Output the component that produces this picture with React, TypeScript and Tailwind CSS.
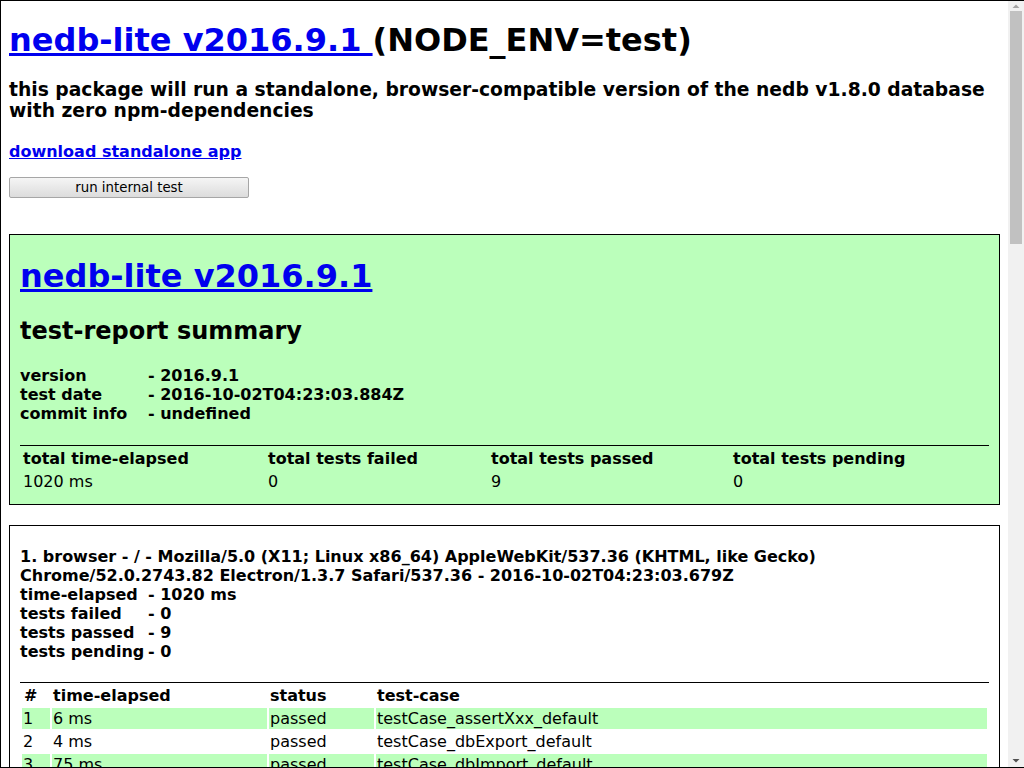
import React from "react";

const tests = [
  ["1", "6 ms", "passed", "testCase_assertXxx_default"],
  ["2", "4 ms", "passed", "testCase_dbExport_default"],
  ["3", "75 ms", "passed", "testCase_dbImport_default"],
  ["4", "12 ms", "passed", "testCase_dbReset_default"],
  ["5", "31 ms", "passed", "testCase_dbTableCreateMany_default"],
  ["6", "8 ms", "passed", "testCase_dbTableDrop_default"],
  ["7", "5 ms", "passed", "testCase_onErrorDefault_default"],
  ["8", "3 ms", "passed", "testCase_testReportCreate_default"],
  ["9", "2 ms", "passed", "testCase_webpage_default"],
];

function ScrollBar() {
  return (
    <div className="w-[16px] shrink-0 bg-[#f1f1f1] flex flex-col items-center">
      <svg width="16" height="10" viewBox="0 0 16 10" className="shrink-0">
        <polygon points="4.5,7 11.5,7 8,3.5" fill="#a3a3a3" />
      </svg>
      <div className="w-[12px] h-[233px] bg-[#c1c1c1] shrink-0" />
      <div className="flex-1" />
      <svg width="16" height="12" viewBox="0 0 16 12" className="shrink-0">
        <polygon points="4.5,4 11.5,4 8,7.5" fill="#505050" />
      </svg>
    </div>
  );
}

export default function App() {
  return (
    <div className="h-[768px] w-[1024px] flex bg-white border-l border-t border-b border-black overflow-hidden">
      <div className="flex-1 min-w-0 overflow-hidden text-black font-['DejaVu_Sans',sans-serif]">
        <div className="px-2 pb-10">
          <h1 className="mt-[21px] text-[32px] leading-[37px] font-bold">
            <a href="#" className="text-[#0000ee] underline">nedb-lite v2016.9.1 </a>
            (NODE_ENV=test)
          </h1>
          <h3 className="mt-[20px] text-[18.72px] leading-[21px] font-bold">
            this package will run a standalone, browser-compatible version of the nedb v1.8.0 database
            with zero npm-dependencies
          </h3>
          <div className="mt-[21px] text-[16px] leading-[19px] font-bold">
            <a href="#" className="text-[#0000ee] underline">download standalone app</a>
          </div>
          <button className="mt-[16px] block w-[240px] h-[21px] border border-[#a6a6a6] rounded-[2px] bg-linear-to-b from-[#f5f5f5] to-[#dcdcdc] text-[13.33px] leading-[18px] text-black">
            run internal test
          </button>

          <div className="mt-[36px] border border-black bg-[#bbffbb] px-[10px] pb-[10px] font-bold">
            <h1 className="pt-[23px] text-[32px] leading-[37px] font-bold">
              <a href="#" className="text-[#0000ee] underline">nedb-lite v2016.9.1</a>
            </h1>
            <h2 className="mt-[22px] text-[24px] leading-[28px] font-bold">test-report summary</h2>
            <div className="mt-[21px] text-[16px] leading-[19px]">
              <div><span className="inline-block w-[128px] whitespace-nowrap">version</span>- 2016.9.1</div>
              <div><span className="inline-block w-[128px] whitespace-nowrap">test date</span>- 2016-10-02T04:23:03.884Z</div>
              <div><span className="inline-block w-[128px] whitespace-nowrap">commit info</span>- undefined</div>
            </div>
            <table className="mt-[22px] w-full table-fixed border-separate border-spacing-[2px] border-t border-black text-[16px] leading-[19px]">
              <colgroup>
                <col className="w-[243px]" />
                <col className="w-[221px]" />
                <col className="w-[240px]" />
                <col className="w-[255px]" />
              </colgroup>
              <thead>
                <tr>
                  <th className="p-[1px] text-left font-bold">total time-elapsed</th>
                  <th className="p-[1px] text-left font-bold">total tests failed</th>
                  <th className="p-[1px] text-left font-bold">total tests passed</th>
                  <th className="p-[1px] text-left font-bold">total tests pending</th>
                </tr>
              </thead>
              <tbody className="font-normal">
                <tr>
                  <td className="p-[1px]">1020 ms</td>
                  <td className="p-[1px]">0</td>
                  <td className="p-[1px]">9</td>
                  <td className="p-[1px]">0</td>
                </tr>
              </tbody>
            </table>
          </div>

          <div className="mt-[20px] border border-black bg-white px-[10px] pb-[10px] font-bold">
            <div className="pt-[21px] text-[16px] leading-[19px]">
              <div>
                1. browser - / - Mozilla/5.0 (X11; Linux x86_64) AppleWebKit/537.36 (KHTML, like Gecko)
                <br />
                Chrome/52.0.2743.82 Electron/1.3.7 Safari/537.36 - 2016-10-02T04:23:03.679Z
              </div>
              <div><span className="inline-block w-[128px] whitespace-nowrap">time-elapsed</span>- 1020 ms</div>
              <div><span className="inline-block w-[128px] whitespace-nowrap">tests failed</span>- 0</div>
              <div><span className="inline-block w-[128px] whitespace-nowrap">tests passed</span>- 9</div>
              <div><span className="inline-block w-[128px] whitespace-nowrap">tests pending</span>- 0</div>
            </div>
            <table className="mt-[21px] w-full table-fixed border-separate border-spacing-[2px] border-t border-black text-[16px] leading-[19px]">
              <colgroup>
                <col className="w-[28px]" />
                <col className="w-[215px]" />
                <col className="w-[105px]" />
                <col className="w-[611px]" />
              </colgroup>
              <thead>
                <tr>
                  <th className="p-[1px] pl-[2px] text-left font-bold">#</th>
                  <th className="p-[1px] text-left font-bold">time-elapsed</th>
                  <th className="p-[1px] text-left font-bold">status</th>
                  <th className="p-[1px] text-left font-bold">test-case</th>
                </tr>
              </thead>
              <tbody className="font-normal">
                {tests.map((t, i) => {
                  const bg = i % 2 === 0 ? "bg-[#bbffbb]" : "";
                  return (
                    <tr key={t[0]}>
                      <td className={`p-[1px] ${bg}`}>{t[0]}</td>
                      <td className={`p-[1px] ${bg}`}>{t[1]}</td>
                      <td className={`p-[1px] ${bg}`}>{t[2]}</td>
                      <td className={`p-[1px] ${bg}`}>{t[3]}</td>
                    </tr>
                  );
                })}
              </tbody>
            </table>
          </div>
        </div>
      </div>
      <ScrollBar />
    </div>
  );
}
